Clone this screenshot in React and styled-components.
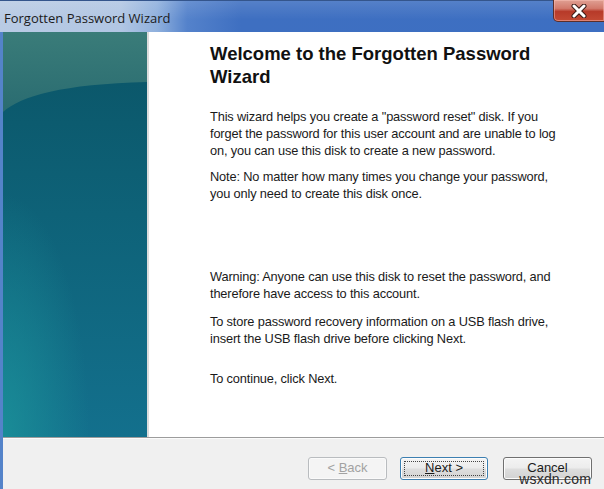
import React from "react";
import styled, { createGlobalStyle } from "styled-components";

const GlobalStyle = createGlobalStyle`
  html, body {
    margin: 0;
    padding: 0;
    background: #fff;
  }
`;

const Window = styled.div`
  position: relative;
  width: 604px;
  height: 489px;
  overflow: hidden;
  display: flex;
  flex-direction: column;
  background: #f0f0f0;
  font-family: "Liberation Sans", Arial, sans-serif;
`;

const TitleBar = styled.div`
  height: 32px;
  flex-shrink: 0;
  display: flex;
  justify-content: space-between;
  align-items: flex-start;
  border-top: 1px solid #34558c;
  box-sizing: border-box;
  background:
    linear-gradient(to bottom, rgba(255, 255, 255, 0.12), rgba(255, 255, 255, 0) 60%),
    linear-gradient(to right, #b9cbe4 0, #b1c6e3 20%, #8fb0dd 26%, #5482cb 31%, #3e6fc1 40%, #3d6fc2 100%);
`;

const Title = styled.span`
  padding: 8px 0 0 4px;
  font-family: "Open Sans", "Noto Sans", sans-serif;
  font-size: 13px;
  color: #1b1b1b;
`;

const CloseButton = styled.div`
  width: 52px;
  height: 22px;
  margin-top: -1px;
  margin-right: -1px;
  box-sizing: border-box;
  border: 1px solid #5b2e2a;
  border-top: none;
  border-radius: 0 0 0 5px;
  display: flex;
  align-items: center;
  justify-content: center;
  background: linear-gradient(to bottom, #e0a093 0, #d27a6c 40%, #b73a29 55%, #c34a34 100%);
  box-shadow: inset 0 0 0 1px rgba(255, 200, 190, 0.45);
`;

const Main = styled.div`
  flex: 1;
  display: flex;
  flex-direction: column;
  border-left: 3px solid #5483c9;
`;

const Upper = styled.div`
  height: 405px;
  display: flex;
  border-bottom: 1px solid #9c9c9c;
`;

const SidePanel = styled.div`
  width: 144px;
  flex-shrink: 0;
  svg {
    display: block;
    width: 100%;
    height: 100%;
  }
`;

const Content = styled.div`
  flex: 1;
  background: #fff;
  border-left: 2px solid #dcdcdc;
  padding: 10px 0 0 61px;
  color: #1a1a1a;
`;

const Heading = styled.h1`
  margin: 0 0 20px;
  font-size: 18.5px;
  line-height: 23px;
  font-weight: bold;
  color: #111;
`;

const Para = styled.p`
  margin: 0 0 ${(p) => p.gap}px;
  font-size: 12.8px;
  line-height: 17px;
  letter-spacing: -0.15px;
`;

const Footer = styled.div`
  flex: 1;
  display: flex;
  justify-content: flex-end;
  align-items: flex-start;
  padding: 18px 12px 0 0;
  background: #f0f0f0;
  border-top: 1px solid #fbfbfb;
`;

const Button = styled.div`
  width: ${(p) => p.w}px;
  height: 23px;
  margin-left: ${(p) => p.ml}px;
  box-sizing: border-box;
  border-radius: 3px;
  display: flex;
  align-items: center;
  justify-content: center;
  padding-bottom: 2px;
  font-size: 13px;
  color: ${(p) => (p.disabled ? "#a2a2a2" : "#1a1a1a")};
  border: 1px solid ${(p) => (p.disabled ? "#b9bcbf" : p.primary ? "#3c7fb1" : "#707070")};
  background: ${(p) =>
    p.disabled
      ? "#f4f4f4"
      : "linear-gradient(to bottom, #f4f4f4 0, #ececec 48%, #dedede 52%, #d2d2d2 100%)"};
  box-shadow: inset 0 0 0 1px ${(p) => (p.disabled ? "#fafafa" : "#fcfcfc")};
  position: relative;

  ${(p) =>
    p.primary &&
    `
    &::after {
      content: "";
      position: absolute;
      inset: 3px;
      border: 1px dotted #444;
    }
  `}

  u {
    text-decoration: underline;
  }
`;

const Watermark = styled.span`
  position: absolute;
  right: 13px;
  bottom: 2px;
  font-size: 14px;
  color: #2a2a2a;
  letter-spacing: 0.2px;
`;

function PanelArt() {
  return (
    <svg viewBox="0 0 144 405" preserveAspectRatio="none">
      <defs>
        <linearGradient id="base" x1="0" y1="0" x2="0" y2="1">
          <stop offset="0" stopColor="#0a5466" />
          <stop offset="0.45" stopColor="#0e6278" />
          <stop offset="1" stopColor="#13708d" />
        </linearGradient>
        <radialGradient id="glow" cx="0" cy="1" r="0.6">
          <stop offset="0" stopColor="#1b9199" stopOpacity="0.85" />
          <stop offset="1" stopColor="#1b9199" stopOpacity="0" />
        </radialGradient>
        <linearGradient id="top" x1="0" y1="0" x2="0" y2="1">
          <stop offset="0" stopColor="#3a7c79" />
          <stop offset="1" stopColor="#2a6c71" />
        </linearGradient>
      </defs>
      <rect width="144" height="405" fill="url(#base)" />
      <rect width="144" height="405" fill="url(#glow)" />
      <path d="M0 80 C 18 64, 60 52, 144 50 V0 H0 Z" fill="url(#top)" />
    </svg>
  );
}

function CloseIcon() {
  return (
    <svg width="18" height="14" viewBox="0 0 18 14">
      <path d="M4 2 L14 12 M14 2 L4 12" stroke="#3a1a16" strokeWidth="5" strokeLinecap="round" />
      <path d="M4 2 L14 12 M14 2 L4 12" stroke="#fff" strokeWidth="3" strokeLinecap="round" />
    </svg>
  );
}

export default function App() {
  return (
    <>
      <GlobalStyle />
      <Window>
        <TitleBar>
          <Title>Forgotten Password Wizard</Title>
          <CloseButton>
            <CloseIcon />
          </CloseButton>
        </TitleBar>
        <Main>
          <Upper>
            <SidePanel>
              <PanelArt />
            </SidePanel>
            <Content>
              <Heading>
                Welcome to the Forgotten Password
                <br />
                Wizard
              </Heading>
              <Para gap={9}>
                This wizard helps you create a "password reset" disk. If you
                <br />
                forget the password for this user account and are unable to log
                <br />
                on, you can use this disk to create a new password.
              </Para>
              <Para gap={66}>
                Note: No matter how many times you change your password,
                <br />
                you only need to create this disk once.
              </Para>
              <Para gap={11}>
                Warning: Anyone can use this disk to reset the password, and
                <br />
                therefore have access to this account.
              </Para>
              <Para gap={23}>
                To store password recovery information on a USB flash drive,
                <br />
                insert the USB flash drive before clicking Next.
              </Para>
              <Para gap={0}>To continue, click Next.</Para>
            </Content>
          </Upper>
          <Footer>
            <Button w={79} ml={0} disabled>
              &lt;&nbsp;<u>B</u>ack
            </Button>
            <Button w={88} ml={13} primary>
              <u>N</u>ext &gt;
            </Button>
            <Button w={89} ml={15}>
              Cancel
            </Button>
          </Footer>
        </Main>
        <Watermark>wsxdn.com</Watermark>
      </Window>
    </>
  );
}
